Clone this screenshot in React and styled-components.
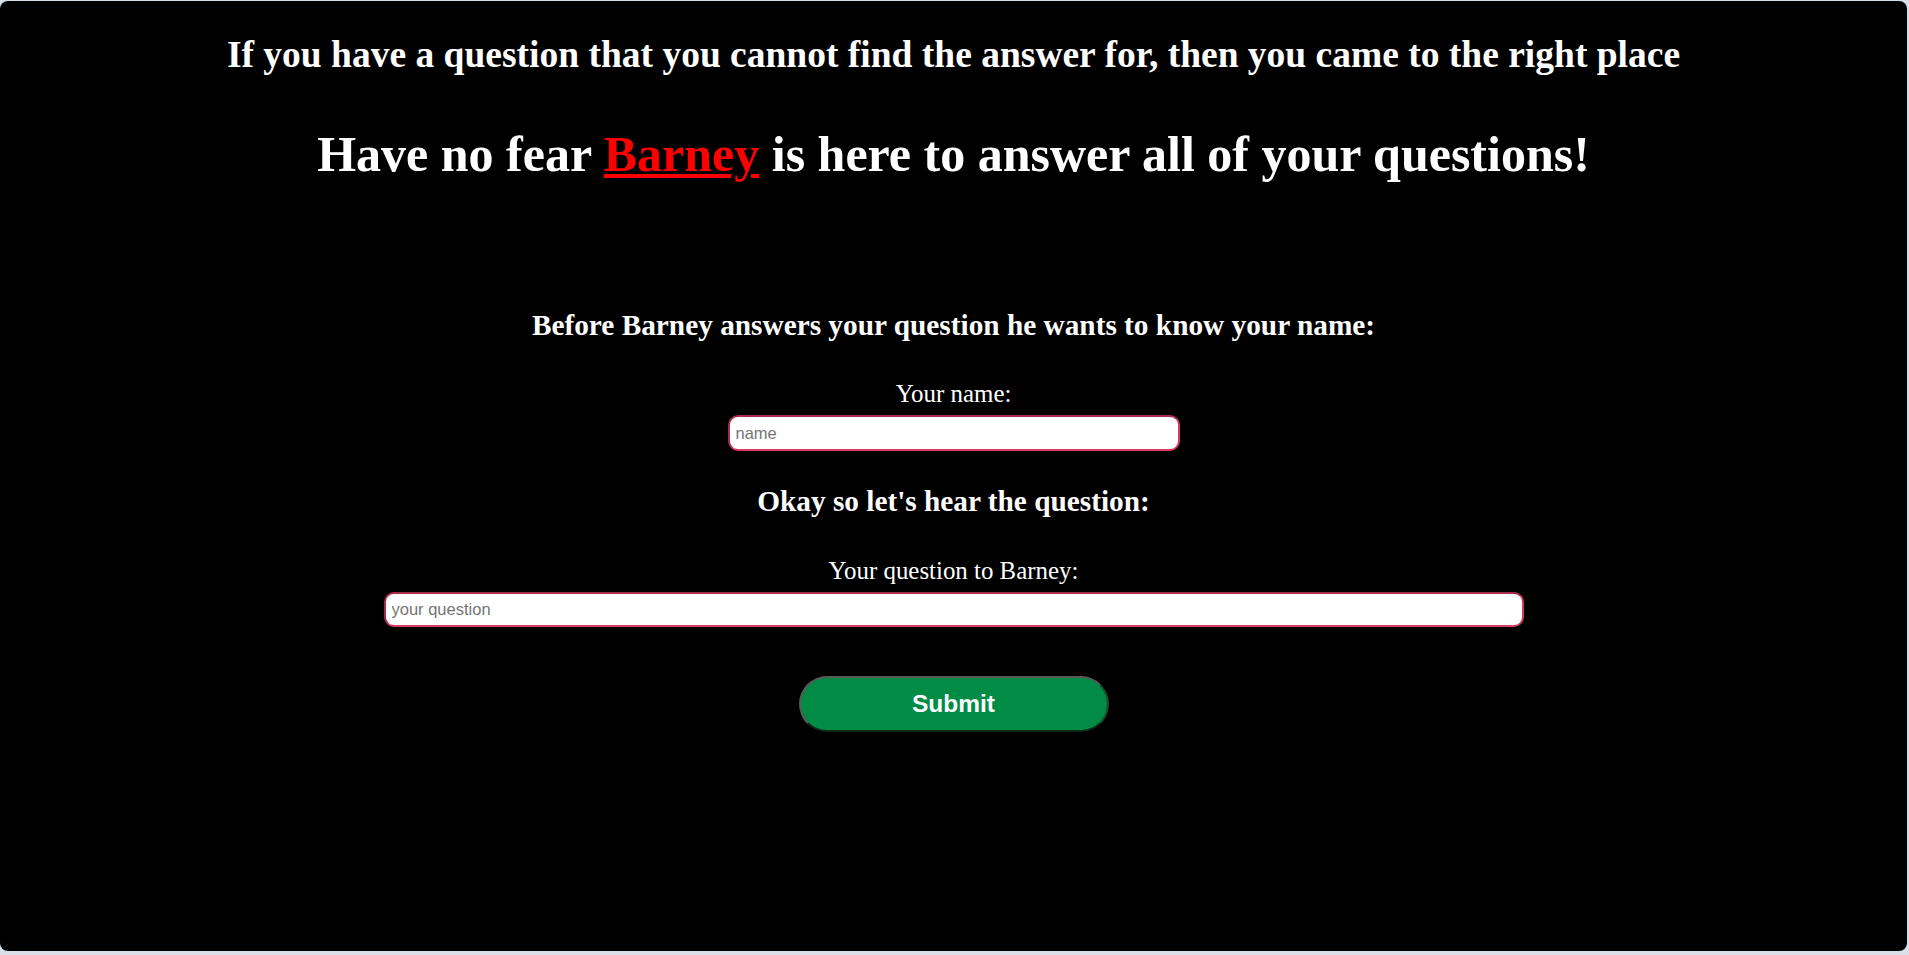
import React from "react";
import styled, { createGlobalStyle } from "styled-components";

const GlobalStyle = createGlobalStyle`
  html, body {
    margin: 0;
    background-color: #d7dfe7;
  }
  body {
    padding: 1px 2px 4px 0;
    font-family: "Liberation Serif", "Times New Roman", serif;
  }
`;

const Page = styled.main`
  height: 950px;
  box-sizing: border-box;
  background-color: #000;
  border-radius: 8px;
  color: #fff;
  display: flex;
  flex-direction: column;
  align-items: center;
  padding-top: 34.5px;
`;

const Title = styled.h2`
  font-size: 37.5px;
  line-height: 1;
  font-weight: bold;
  margin: 0;
`;

const Headline = styled.h1`
  font-size: 50px;
  line-height: 1;
  font-weight: bold;
  margin: 56px 0 0;
`;

const Name = styled.a`
  color: #ff0000;
  text-decoration: underline;
  text-decoration-thickness: 4px;
  text-underline-offset: 3px;
`;

const Prompt = styled.h3`
  font-size: 29.3px;
  line-height: 1;
  font-weight: bold;
  margin: ${(p) => p.$top}px 0 0;
`;

const Field = styled.div`
  display: flex;
  flex-direction: column;
  align-items: center;
  margin-top: 42px;
`;

const Label = styled.label`
  font-size: 24.9px;
  line-height: 1;
`;

const Input = styled.input`
  box-sizing: border-box;
  width: ${(p) => p.$width}px;
  height: ${(p) => p.$height}px;
  margin-top: 8px;
  padding: 0 6px;
  border: 2px solid;
  border-color: #a52c4d #d8395f #dc3b62 #a52c4d;
  border-radius: 10px;
  background-color: #fff;
  font-family: "Liberation Sans", Arial, sans-serif;
  font-size: 16.5px;
  color: #000;
  outline: none;

  &::placeholder {
    color: #757575;
  }
`;

const SubmitBtn = styled.button`
  box-sizing: border-box;
  width: 310px;
  height: 56px;
  margin-top: 49.5px;
  border: 2px solid;
  border-color: #5a5a5a #1f4a30 #0b2a18 #5a5a5a;
  border-radius: 28px;
  background-color: #008c45;
  color: #fff;
  font-family: "Liberation Sans", Arial, sans-serif;
  font-size: 24.5px;
  font-weight: bold;
  cursor: pointer;
`;

export default function App() {
  return (
    <>
      <GlobalStyle />
      <Page>
        <Title>
          If you have a question that you cannot find the answer for, then you came to the right place
        </Title>
        <Headline>
          Have no fear <Name href="#">Barney</Name> is here to answer all of your questions!
        </Headline>

        <Prompt $top={132}>Before Barney answers your question he wants to know your name:</Prompt>
        <Field>
          <Label htmlFor="name">Your name:</Label>
          <Input id="name" placeholder="name" $width={452} $height={36} />
        </Field>

        <Prompt $top={36.2}>Okay so let's hear the question:</Prompt>
        <Field>
          <Label htmlFor="question">Your question to Barney:</Label>
          <Input id="question" placeholder="your question" $width={1140} $height={35} />
        </Field>

        <SubmitBtn type="submit">Submit</SubmitBtn>
      </Page>
    </>
  );
}
